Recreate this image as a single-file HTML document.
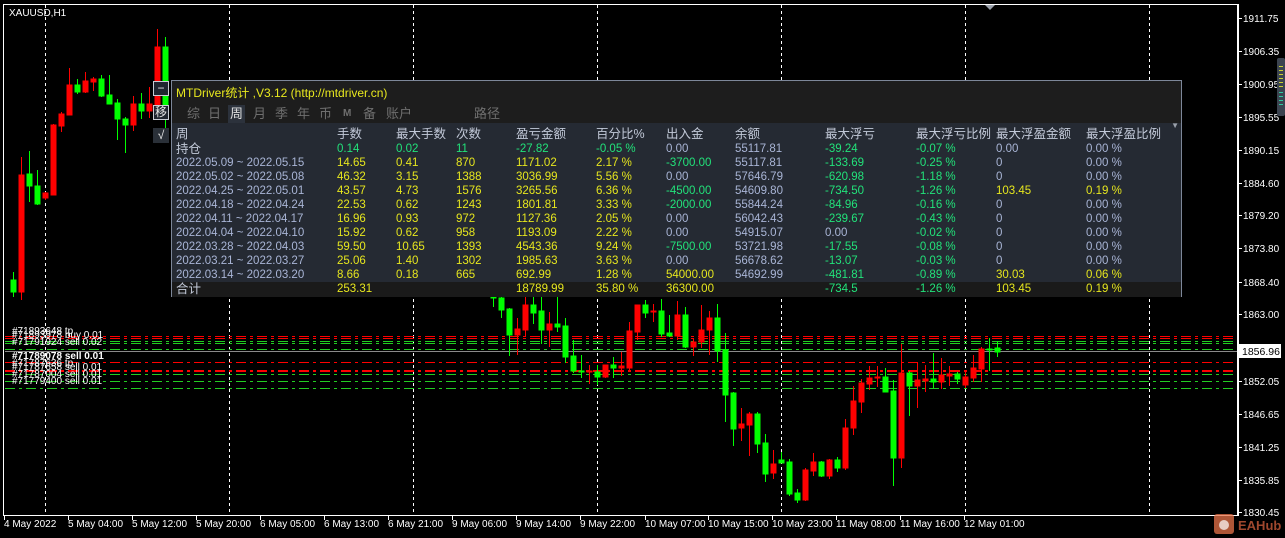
<!DOCTYPE html>
<html><head><meta charset="utf-8"><style>
*{margin:0;padding:0;box-sizing:border-box}
body{width:1285px;height:538px;background:#000;overflow:hidden;position:relative;font-family:"Liberation Sans","Noto Sans CJK SC",sans-serif}
svg{position:absolute;left:0;top:0}
.t{position:absolute;white-space:nowrap}
#panel{position:absolute;left:171px;top:80px;width:1011px;height:217px;border:1px solid #7d8799;background:#252a33}
#hdr{position:absolute;left:0;top:0;width:1009px;height:42px;background:#1d1d1d}
.row{position:absolute;left:0;width:1009px;height:14px;font-size:11.5px;line-height:14px}
.row span{position:absolute;top:0}
.y{color:#e6e61e}.g{color:#22e27a}.b{color:#a9b5d6}.h{color:#c2c9d8;font-size:12.5px}
.tab{position:absolute;top:24px;font-size:13px;color:#6f6f6f;line-height:18px}
.btn{position:absolute;left:153px;width:16px;height:15px;border:1px solid #c8ccd4;background:#202630;color:#e8e8e8;font-size:12px;text-align:center;line-height:13px}
</style></head><body>
<svg width="1285" height="538" xmlns="http://www.w3.org/2000/svg">
<rect x="3.5" y="4.5" width="1234" height="511" fill="none" stroke="#fff" stroke-width="1"/>
<g stroke="#fff" stroke-dasharray="3,3" stroke-width="1">
<line x1="45.5" y1="5" x2="45.5" y2="515"/><line x1="229.5" y1="5" x2="229.5" y2="515"/><line x1="413.5" y1="5" x2="413.5" y2="515"/><line x1="597.5" y1="5" x2="597.5" y2="515"/><line x1="781.5" y1="5" x2="781.5" y2="515"/><line x1="965.5" y1="5" x2="965.5" y2="515"/><line x1="1149.5" y1="5" x2="1149.5" y2="515"/>
</g>
<path d="M985 5 L995 5 L990 10 Z" fill="#9aa0aa"/>
<g stroke-width="1" stroke-dasharray="10,4,3,4">
<line x1="5" y1="336.5" x2="1237" y2="336.5" stroke="#f00"/>
<line x1="5" y1="338.5" x2="1237" y2="338.5" stroke="#f00"/>
<line x1="5" y1="341.5" x2="1237" y2="341.5" stroke="#2c2"/>
<line x1="5" y1="343.5" x2="1237" y2="343.5" stroke="#2c2"/>
<line x1="5" y1="349.5" x2="1237" y2="349.5" stroke="#2c2"/>
<line x1="5" y1="362.5" x2="1237" y2="362.5" stroke="#f00"/>
<line x1="5" y1="370.5" x2="1237" y2="370.5" stroke="#f00"/>
<line x1="5" y1="371.5" x2="1237" y2="371.5" stroke="#f00"/>
<line x1="5" y1="374.5" x2="1237" y2="374.5" stroke="#2c2"/>
<line x1="5" y1="381.5" x2="1237" y2="381.5" stroke="#2c2"/>
<line x1="5" y1="388.5" x2="1237" y2="388.5" stroke="#2c2"/>
</g>
<line x1="5" y1="351.5" x2="1237" y2="351.5" stroke="#8a8a8a"/>
<g id="c" stroke-width="1">
<g stroke="#0f0" fill="#0f0">
<line x1="13.5" y1="272" x2="13.5" y2="297"/><rect x="11" y="280" width="5" height="12"/>
<line x1="29.5" y1="151" x2="29.5" y2="202"/><rect x="27" y="174" width="5" height="12"/>
<line x1="37.5" y1="170" x2="37.5" y2="205"/><rect x="35" y="186" width="5" height="18"/>
<line x1="77.5" y1="79" x2="77.5" y2="94"/><rect x="75" y="85" width="5" height="7"/>
<line x1="101.5" y1="75" x2="101.5" y2="97"/><rect x="99" y="79" width="5" height="17"/>
<line x1="109.5" y1="75" x2="109.5" y2="104"/><rect x="107" y="95" width="5" height="9"/>
<line x1="117.5" y1="99" x2="117.5" y2="140"/><rect x="115" y="103" width="5" height="16"/>
<line x1="125.5" y1="117" x2="125.5" y2="153"/><rect x="123" y="119" width="5" height="6"/>
<line x1="141.5" y1="93" x2="141.5" y2="119"/><rect x="139" y="104" width="5" height="7"/>
<line x1="165.5" y1="37" x2="165.5" y2="130"/><rect x="163" y="47" width="5" height="72"/>
<line x1="493.5" y1="296" x2="493.5" y2="307"/><rect x="491" y="296" width="5" height="2"/>
<line x1="501.5" y1="297" x2="501.5" y2="318"/><rect x="499" y="298" width="5" height="12"/>
<line x1="509.5" y1="308" x2="509.5" y2="356"/><rect x="507" y="309" width="5" height="26"/>
<line x1="533.5" y1="295" x2="533.5" y2="324"/><rect x="531" y="305" width="5" height="8"/>
<line x1="541.5" y1="295" x2="541.5" y2="344"/><rect x="539" y="311" width="5" height="19"/>
<line x1="557.5" y1="295" x2="557.5" y2="332"/><rect x="555" y="324" width="5" height="3"/>
<line x1="565.5" y1="318" x2="565.5" y2="363"/><rect x="563" y="326" width="5" height="31"/>
<line x1="573.5" y1="340" x2="573.5" y2="373"/><rect x="571" y="356" width="5" height="15"/>
<line x1="581.5" y1="355" x2="581.5" y2="378"/><rect x="579" y="371" width="5" height="1"/>
<line x1="597.5" y1="365" x2="597.5" y2="385"/><rect x="595" y="372" width="5" height="5"/>
<line x1="613.5" y1="357" x2="613.5" y2="378"/><rect x="611" y="365" width="5" height="3"/>
<line x1="645.5" y1="300" x2="645.5" y2="318"/><rect x="643" y="305" width="5" height="8"/>
<line x1="661.5" y1="299" x2="661.5" y2="337"/><rect x="659" y="311" width="5" height="23"/>
<line x1="669.5" y1="315" x2="669.5" y2="337"/><rect x="667" y="333" width="5" height="3"/>
<line x1="685.5" y1="307" x2="685.5" y2="348"/><rect x="683" y="315" width="5" height="32"/>
<line x1="717.5" y1="304" x2="717.5" y2="362"/><rect x="715" y="318" width="5" height="33"/>
<line x1="725.5" y1="333" x2="725.5" y2="422"/><rect x="723" y="350" width="5" height="45"/>
<line x1="733.5" y1="392" x2="733.5" y2="446"/><rect x="731" y="393" width="5" height="36"/>
<line x1="757.5" y1="412" x2="757.5" y2="453"/><rect x="755" y="414" width="5" height="30"/>
<line x1="765.5" y1="434" x2="765.5" y2="482"/><rect x="763" y="443" width="5" height="31"/>
<line x1="781.5" y1="452" x2="781.5" y2="463"/><rect x="779" y="460" width="5" height="3"/>
<line x1="789.5" y1="459" x2="789.5" y2="496"/><rect x="787" y="462" width="5" height="32"/>
<line x1="797.5" y1="489" x2="797.5" y2="503"/><rect x="795" y="493" width="5" height="7"/>
<line x1="821.5" y1="461" x2="821.5" y2="477"/><rect x="819" y="462" width="5" height="14"/>
<line x1="837.5" y1="457" x2="837.5" y2="472"/><rect x="835" y="460" width="5" height="8"/>
<line x1="885.5" y1="368" x2="885.5" y2="392"/><rect x="883" y="377" width="5" height="15"/>
<line x1="893.5" y1="380" x2="893.5" y2="486"/><rect x="891" y="391" width="5" height="67"/>
<line x1="909.5" y1="371" x2="909.5" y2="416"/><rect x="907" y="373" width="5" height="13"/>
<line x1="933.5" y1="353" x2="933.5" y2="388"/><rect x="931" y="379" width="5" height="3"/>
<line x1="957.5" y1="372" x2="957.5" y2="384"/><rect x="955" y="374" width="5" height="5"/>
<line x1="989.5" y1="338" x2="989.5" y2="371"/><rect x="987" y="349" width="5" height="1"/>
<line x1="997.5" y1="341" x2="997.5" y2="357"/><rect x="995" y="348" width="5" height="4"/>
</g>
<g stroke="#f00" fill="#f00">
<line x1="21.5" y1="157" x2="21.5" y2="300"/><rect x="19" y="175" width="5" height="117"/>
<line x1="45.5" y1="192" x2="45.5" y2="200"/><rect x="43" y="193" width="5" height="5"/>
<line x1="53.5" y1="124" x2="53.5" y2="195"/><rect x="51" y="125" width="5" height="70"/>
<line x1="61.5" y1="112" x2="61.5" y2="132"/><rect x="59" y="114" width="5" height="12"/>
<line x1="69.5" y1="68" x2="69.5" y2="115"/><rect x="67" y="85" width="5" height="30"/>
<line x1="85.5" y1="72" x2="85.5" y2="93"/><rect x="83" y="81" width="5" height="11"/>
<line x1="93.5" y1="77" x2="93.5" y2="91"/><rect x="91" y="79" width="5" height="3"/>
<line x1="133.5" y1="96" x2="133.5" y2="131"/><rect x="131" y="104" width="5" height="21"/>
<line x1="149.5" y1="87" x2="149.5" y2="118"/><rect x="147" y="104" width="5" height="7"/>
<line x1="157.5" y1="29" x2="157.5" y2="106"/><rect x="155" y="47" width="5" height="59"/>
<line x1="517.5" y1="318" x2="517.5" y2="355"/><rect x="515" y="329" width="5" height="6"/>
<line x1="525.5" y1="295" x2="525.5" y2="337"/><rect x="523" y="305" width="5" height="25"/>
<line x1="549.5" y1="312" x2="549.5" y2="347"/><rect x="547" y="324" width="5" height="6"/>
<line x1="589.5" y1="365" x2="589.5" y2="384"/><rect x="587" y="371" width="5" height="1"/>
<line x1="605.5" y1="365" x2="605.5" y2="378"/><rect x="603" y="365" width="5" height="12"/>
<line x1="621.5" y1="352" x2="621.5" y2="376"/><rect x="619" y="366" width="5" height="2"/>
<line x1="629.5" y1="322" x2="629.5" y2="370"/><rect x="627" y="331" width="5" height="37"/>
<line x1="637.5" y1="305" x2="637.5" y2="340"/><rect x="635" y="305" width="5" height="27"/>
<line x1="653.5" y1="304" x2="653.5" y2="322"/><rect x="651" y="311" width="5" height="1"/>
<line x1="677.5" y1="301" x2="677.5" y2="340"/><rect x="675" y="315" width="5" height="21"/>
<line x1="693.5" y1="338" x2="693.5" y2="356"/><rect x="691" y="342" width="5" height="5"/>
<line x1="701.5" y1="305" x2="701.5" y2="348"/><rect x="699" y="330" width="5" height="12"/>
<line x1="709.5" y1="311" x2="709.5" y2="355"/><rect x="707" y="318" width="5" height="12"/>
<line x1="741.5" y1="408" x2="741.5" y2="441"/><rect x="739" y="424" width="5" height="4"/>
<line x1="749.5" y1="412" x2="749.5" y2="456"/><rect x="747" y="414" width="5" height="11"/>
<line x1="773.5" y1="450" x2="773.5" y2="479"/><rect x="771" y="464" width="5" height="9"/>
<line x1="805.5" y1="468" x2="805.5" y2="501"/><rect x="803" y="470" width="5" height="30"/>
<line x1="813.5" y1="453" x2="813.5" y2="476"/><rect x="811" y="462" width="5" height="9"/>
<line x1="829.5" y1="459" x2="829.5" y2="479"/><rect x="827" y="460" width="5" height="16"/>
<line x1="845.5" y1="419" x2="845.5" y2="470"/><rect x="843" y="428" width="5" height="40"/>
<line x1="853.5" y1="386" x2="853.5" y2="435"/><rect x="851" y="401" width="5" height="27"/>
<line x1="861.5" y1="379" x2="861.5" y2="413"/><rect x="859" y="383" width="5" height="19"/>
<line x1="869.5" y1="366" x2="869.5" y2="390"/><rect x="867" y="378" width="5" height="6"/>
<line x1="877.5" y1="366" x2="877.5" y2="387"/><rect x="875" y="377" width="5" height="1"/>
<line x1="901.5" y1="344" x2="901.5" y2="468"/><rect x="899" y="373" width="5" height="85"/>
<line x1="917.5" y1="363" x2="917.5" y2="408"/><rect x="915" y="380" width="5" height="6"/>
<line x1="925.5" y1="365" x2="925.5" y2="392"/><rect x="923" y="379" width="5" height="2"/>
<line x1="941.5" y1="358" x2="941.5" y2="389"/><rect x="939" y="375" width="5" height="7"/>
<line x1="949.5" y1="366" x2="949.5" y2="386"/><rect x="947" y="374" width="5" height="2"/>
<line x1="965.5" y1="372" x2="965.5" y2="388"/><rect x="963" y="377" width="5" height="8"/>
<line x1="973.5" y1="355" x2="973.5" y2="382"/><rect x="971" y="368" width="5" height="10"/>
<line x1="981.5" y1="347" x2="981.5" y2="382"/><rect x="979" y="349" width="5" height="20"/>
</g>
</g>
<line x1="1238.5" y1="4" x2="1238.5" y2="516" stroke="#fff"/>
<line x1="3" y1="515.5" x2="1239" y2="515.5" stroke="#fff"/>
<g stroke="#fff">
<line x1="1238" y1="18.5" x2="1242" y2="18.5"/><line x1="1238" y1="51.5" x2="1242" y2="51.5"/><line x1="1238" y1="84.5" x2="1242" y2="84.5"/><line x1="1238" y1="117.5" x2="1242" y2="117.5"/><line x1="1238" y1="150.5" x2="1242" y2="150.5"/><line x1="1238" y1="183.5" x2="1242" y2="183.5"/><line x1="1238" y1="215.5" x2="1242" y2="215.5"/><line x1="1238" y1="248.5" x2="1242" y2="248.5"/><line x1="1238" y1="282.5" x2="1242" y2="282.5"/><line x1="1238" y1="314.5" x2="1242" y2="314.5"/><line x1="1238" y1="381.5" x2="1242" y2="381.5"/><line x1="1238" y1="414.5" x2="1242" y2="414.5"/><line x1="1238" y1="447.5" x2="1242" y2="447.5"/><line x1="1238" y1="480.5" x2="1242" y2="480.5"/><line x1="1238" y1="512.5" x2="1242" y2="512.5"/>
<line x1="4.5" y1="515" x2="4.5" y2="520"/><line x1="68.5" y1="515" x2="68.5" y2="520"/><line x1="132.5" y1="515" x2="132.5" y2="520"/><line x1="196.5" y1="515" x2="196.5" y2="520"/><line x1="260.5" y1="515" x2="260.5" y2="520"/><line x1="324.5" y1="515" x2="324.5" y2="520"/><line x1="388.5" y1="515" x2="388.5" y2="520"/><line x1="452.5" y1="515" x2="452.5" y2="520"/><line x1="516.5" y1="515" x2="516.5" y2="520"/><line x1="580.5" y1="515" x2="580.5" y2="520"/><line x1="645.5" y1="515" x2="645.5" y2="520"/><line x1="708.5" y1="515" x2="708.5" y2="520"/><line x1="772.5" y1="515" x2="772.5" y2="520"/><line x1="836.5" y1="515" x2="836.5" y2="520"/><line x1="900.5" y1="515" x2="900.5" y2="520"/><line x1="964.5" y1="515" x2="964.5" y2="520"/>
</g>
<g fill="#fff" font-family="Liberation Sans, sans-serif" font-size="10">
<text x="1243" y="22">1911.75</text><text x="1243" y="55">1906.35</text><text x="1243" y="88">1900.95</text><text x="1243" y="121">1895.55</text><text x="1243" y="154">1890.15</text><text x="1243" y="187">1884.60</text><text x="1243" y="219">1879.20</text><text x="1243" y="252">1873.80</text><text x="1243" y="286">1868.40</text><text x="1243" y="318">1863.00</text><text x="1243" y="385">1852.05</text><text x="1243" y="418">1846.65</text><text x="1243" y="451">1841.25</text><text x="1243" y="484">1835.85</text><text x="1243" y="516">1830.45</text>
<text x="4" y="527">4 May 2022</text><text x="68" y="527">5 May 04:00</text><text x="132" y="527">5 May 12:00</text><text x="196" y="527">5 May 20:00</text><text x="260" y="527">6 May 05:00</text><text x="324" y="527">6 May 13:00</text><text x="388" y="527">6 May 21:00</text><text x="452" y="527">9 May 06:00</text><text x="516" y="527">9 May 14:00</text><text x="580" y="527">9 May 22:00</text><text x="645" y="527">10 May 07:00</text><text x="708" y="527">10 May 15:00</text><text x="772" y="527">10 May 23:00</text><text x="836" y="527">11 May 08:00</text><text x="900" y="527">11 May 16:00</text><text x="964" y="527">12 May 01:00</text>
<text x="9" y="16">XAUUSD,H1</text>
<text x="12" y="334">#71893648 tp</text><text x="12" y="338">#71893978 buy 0.01</text><text x="12" y="345">#71791924 sell 0.02</text>
<text x="12" y="359" font-weight="bold">#71789078 sell 0.01</text>
<text x="12" y="366">#71787636 tp</text><text x="12" y="370">#71787658 sell 0.01</text><text x="12" y="377">#71787004 sell 0.01</text><text x="12" y="384">#71779400 sell 0.01</text>
</g>
<rect x="1239" y="344" width="42" height="14" fill="#fff"/>
<text x="1242" y="355" font-family="Liberation Sans, sans-serif" font-size="10.5" fill="#000">1856.96</text>
<rect x="1277" y="58" width="8" height="58" fill="#3c4450" rx="2"/>
<g fill="#c8d030"><rect x="1279" y="66" width="4" height="1"/><rect x="1279" y="70" width="4" height="1"/><rect x="1279" y="74" width="4" height="1"/><rect x="1279" y="78" width="4" height="1"/><rect x="1279" y="82" width="4" height="1"/><rect x="1279" y="86" width="4" height="1"/></g>
<g fill="#30c8a0"><rect x="1279" y="92" width="4" height="1"/><rect x="1279" y="96" width="4" height="1"/><rect x="1279" y="100" width="4" height="1"/><rect x="1279" y="104" width="4" height="1"/></g>
<rect x="1214" y="514" width="20" height="20" rx="3" fill="#e8734a" opacity="0.75"/>
<circle cx="1224" cy="525" r="5" fill="#fff" opacity="0.7"/>
<text x="1238" y="530" font-family="Liberation Sans, sans-serif" font-size="13" font-weight="bold" fill="#c85a3a" opacity="0.8">EAHub</text>
</svg>
<div class="btn" style="top:81px">−</div>
<div class="btn" style="top:105px">移</div>
<div class="btn" style="top:128px;border-color:#2a3038;background:#2a3038">√</div>
<div id="panel">
<div id="hdr">
<div class="t" style="left:4px;top:3px;font-size:12px;color:#e8e81e">MTDriver统计 ,V3.12 (http://mtdriver.cn)</div>
<div class="tab" style="left:15px">综</div><div class="tab" style="left:36px">日</div>
<div class="tab" style="left:56px;color:#e0e0e0;background:#2c323c;padding:0 2px">周</div>
<div class="tab" style="left:81px">月</div><div class="tab" style="left:103px">季</div><div class="tab" style="left:125px">年</div><div class="tab" style="left:147px">币</div>
<div class="tab" style="left:171px;font-size:10px;font-weight:bold">M</div><div class="tab" style="left:191px">备</div><div class="tab" style="left:214px">账户</div><div class="tab" style="left:302px">路径</div>
</div>
<div class="t" style="right:2px;top:40px;color:#9aa0aa;font-size:8px">▼</div>
<div class="row h" style="top:46px;height:16px"><span style="left:4px">周</span><span style="left:165px">手数</span><span style="left:224px">最大手数</span><span style="left:284px">次数</span><span style="left:344px">盈亏金额</span><span style="left:424px">百分比%</span><span style="left:494px">出入金</span><span style="left:563px">余额</span><span style="left:653px">最大浮亏</span><span style="left:744px">最大浮亏比例</span><span style="left:824px">最大浮盈金额</span><span style="left:914px">最大浮盈比例</span></div>
<div class="row" style="top:61px"><span class="h" style="left:4px">持仓</span><span class="g" style="left:165px">0.14</span><span class="g" style="left:224px">0.02</span><span class="g" style="left:284px">11</span><span class="g" style="left:344px">-27.82</span><span class="g" style="left:424px">-0.05 %</span><span class="b" style="left:494px">0.00</span><span class="b" style="left:563px">55117.81</span><span class="g" style="left:653px">-39.24</span><span class="g" style="left:744px">-0.07 %</span><span class="b" style="left:824px">0.00</span><span class="b" style="left:914px">0.00 %</span></div>
<div class="row" style="top:75px"><span class="b" style="left:4px">2022.05.09 ~ 2022.05.15</span><span class="y" style="left:165px">14.65</span><span class="y" style="left:224px">0.41</span><span class="y" style="left:284px">870</span><span class="y" style="left:344px">1171.02</span><span class="y" style="left:424px">2.17 %</span><span class="g" style="left:494px">-3700.00</span><span class="b" style="left:563px">55117.81</span><span class="g" style="left:653px">-133.69</span><span class="g" style="left:744px">-0.25 %</span><span class="b" style="left:824px">0</span><span class="b" style="left:914px">0.00 %</span></div>
<div class="row" style="top:89px"><span class="b" style="left:4px">2022.05.02 ~ 2022.05.08</span><span class="y" style="left:165px">46.32</span><span class="y" style="left:224px">3.15</span><span class="y" style="left:284px">1388</span><span class="y" style="left:344px">3036.99</span><span class="y" style="left:424px">5.56 %</span><span class="b" style="left:494px">0.00</span><span class="b" style="left:563px">57646.79</span><span class="g" style="left:653px">-620.98</span><span class="g" style="left:744px">-1.18 %</span><span class="b" style="left:824px">0</span><span class="b" style="left:914px">0.00 %</span></div>
<div class="row" style="top:103px"><span class="b" style="left:4px">2022.04.25 ~ 2022.05.01</span><span class="y" style="left:165px">43.57</span><span class="y" style="left:224px">4.73</span><span class="y" style="left:284px">1576</span><span class="y" style="left:344px">3265.56</span><span class="y" style="left:424px">6.36 %</span><span class="g" style="left:494px">-4500.00</span><span class="b" style="left:563px">54609.80</span><span class="g" style="left:653px">-734.50</span><span class="g" style="left:744px">-1.26 %</span><span class="y" style="left:824px">103.45</span><span class="y" style="left:914px">0.19 %</span></div>
<div class="row" style="top:117px"><span class="b" style="left:4px">2022.04.18 ~ 2022.04.24</span><span class="y" style="left:165px">22.53</span><span class="y" style="left:224px">0.62</span><span class="y" style="left:284px">1243</span><span class="y" style="left:344px">1801.81</span><span class="y" style="left:424px">3.33 %</span><span class="g" style="left:494px">-2000.00</span><span class="b" style="left:563px">55844.24</span><span class="g" style="left:653px">-84.96</span><span class="g" style="left:744px">-0.16 %</span><span class="b" style="left:824px">0</span><span class="b" style="left:914px">0.00 %</span></div>
<div class="row" style="top:131px"><span class="b" style="left:4px">2022.04.11 ~ 2022.04.17</span><span class="y" style="left:165px">16.96</span><span class="y" style="left:224px">0.93</span><span class="y" style="left:284px">972</span><span class="y" style="left:344px">1127.36</span><span class="y" style="left:424px">2.05 %</span><span class="b" style="left:494px">0.00</span><span class="b" style="left:563px">56042.43</span><span class="g" style="left:653px">-239.67</span><span class="g" style="left:744px">-0.43 %</span><span class="b" style="left:824px">0</span><span class="b" style="left:914px">0.00 %</span></div>
<div class="row" style="top:145px"><span class="b" style="left:4px">2022.04.04 ~ 2022.04.10</span><span class="y" style="left:165px">15.92</span><span class="y" style="left:224px">0.62</span><span class="y" style="left:284px">958</span><span class="y" style="left:344px">1193.09</span><span class="y" style="left:424px">2.22 %</span><span class="b" style="left:494px">0.00</span><span class="b" style="left:563px">54915.07</span><span class="b" style="left:653px">0.00</span><span class="g" style="left:744px">-0.02 %</span><span class="b" style="left:824px">0</span><span class="b" style="left:914px">0.00 %</span></div>
<div class="row" style="top:159px"><span class="b" style="left:4px">2022.03.28 ~ 2022.04.03</span><span class="y" style="left:165px">59.50</span><span class="y" style="left:224px">10.65</span><span class="y" style="left:284px">1393</span><span class="y" style="left:344px">4543.36</span><span class="y" style="left:424px">9.24 %</span><span class="g" style="left:494px">-7500.00</span><span class="b" style="left:563px">53721.98</span><span class="g" style="left:653px">-17.55</span><span class="g" style="left:744px">-0.08 %</span><span class="b" style="left:824px">0</span><span class="b" style="left:914px">0.00 %</span></div>
<div class="row" style="top:173px"><span class="b" style="left:4px">2022.03.21 ~ 2022.03.27</span><span class="y" style="left:165px">25.06</span><span class="y" style="left:224px">1.40</span><span class="y" style="left:284px">1302</span><span class="y" style="left:344px">1985.63</span><span class="y" style="left:424px">3.63 %</span><span class="b" style="left:494px">0.00</span><span class="b" style="left:563px">56678.62</span><span class="g" style="left:653px">-13.07</span><span class="g" style="left:744px">-0.03 %</span><span class="b" style="left:824px">0</span><span class="b" style="left:914px">0.00 %</span></div>
<div class="row" style="top:187px"><span class="b" style="left:4px">2022.03.14 ~ 2022.03.20</span><span class="y" style="left:165px">8.66</span><span class="y" style="left:224px">0.18</span><span class="y" style="left:284px">665</span><span class="y" style="left:344px">692.99</span><span class="y" style="left:424px">1.28 %</span><span class="y" style="left:494px">54000.00</span><span class="b" style="left:563px">54692.99</span><span class="g" style="left:653px">-481.81</span><span class="g" style="left:744px">-0.89 %</span><span class="y" style="left:824px">30.03</span><span class="y" style="left:914px">0.06 %</span></div>
<div class="row" style="top:201px;height:15px;background:#1a1a1a"><span class="h" style="left:4px">合计</span><span class="y" style="left:165px">253.31</span><span class="y" style="left:344px">18789.99</span><span class="y" style="left:424px">35.80 %</span><span class="y" style="left:494px">36300.00</span><span class="g" style="left:653px">-734.5</span><span class="g" style="left:744px">-1.26 %</span><span class="y" style="left:824px">103.45</span><span class="y" style="left:914px">0.19 %</span></div>
</div>
</body></html>
